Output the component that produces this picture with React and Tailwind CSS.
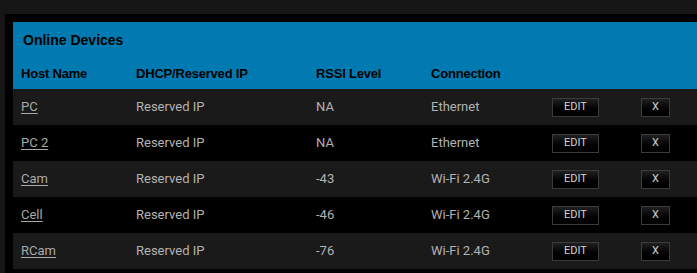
const devices = [
  { name: 'PC', ip: 'Reserved IP', rssi: 'NA', conn: 'Ethernet' },
  { name: 'PC 2', ip: 'Reserved IP', rssi: 'NA', conn: 'Ethernet' },
  { name: 'Cam', ip: 'Reserved IP', rssi: '-43', conn: 'Wi-Fi 2.4G' },
  { name: 'Cell', ip: 'Reserved IP', rssi: '-46', conn: 'Wi-Fi 2.4G' },
  { name: 'RCam', ip: 'Reserved IP', rssi: '-76', conn: 'Wi-Fi 2.4G' },
];

const cols = 'grid grid-cols-[115px_180px_115px_121px_89px_1fr] items-center pl-2';

function TableButton({ children, wide }) {
  return (
    <button
      type="button"
      className={`flex h-[19px] items-center justify-center border border-[#3b3b3b] bg-gradient-to-b from-[#202020] to-black text-[11px] text-[#d0d0d0] ${wide ? 'w-[47px]' : 'w-[29px]'}`}
    >
      {children}
    </button>
  );
}

export default function App() {
  return (
    <div
      className="h-[273px] w-[697px] overflow-hidden bg-[#161616] pl-[5px] pt-[14px]"
      style={{ fontFamily: 'Roboto, "Liberation Sans", Arial, sans-serif' }}
    >
      <div className="h-full bg-black pl-2 pt-2">
        <div className="bg-[#007ab1] text-black" style={{ fontFamily: '"Liberation Sans", Arial, sans-serif' }}>
          <div className="flex h-[36px] items-center pl-[10px] text-[14px] font-bold">Online Devices</div>
          <div className={`${cols} h-[31px] text-[13px] font-bold tracking-[-0.2px]`}>
            <span>Host Name</span>
            <span>DHCP/Reserved IP</span>
            <span>RSSI Level</span>
            <span>Connection</span>
            <span />
            <span />
          </div>
        </div>
        {devices.map((d, i) => (
          <div
            key={d.name}
            className={`${cols} h-[36px] text-[13px] text-[#b3b3b3] ${i % 2 === 0 ? 'bg-[#1a1a1a]' : 'bg-black'}`}
          >
            <a href="#" className="w-fit text-[#a9a9a9] underline underline-offset-2">
              {d.name}
            </a>
            <span>{d.ip}</span>
            <span>{d.rssi}</span>
            <span>{d.conn}</span>
            <TableButton wide>EDIT</TableButton>
            <TableButton>X</TableButton>
          </div>
        ))}
      </div>
    </div>
  );
}
